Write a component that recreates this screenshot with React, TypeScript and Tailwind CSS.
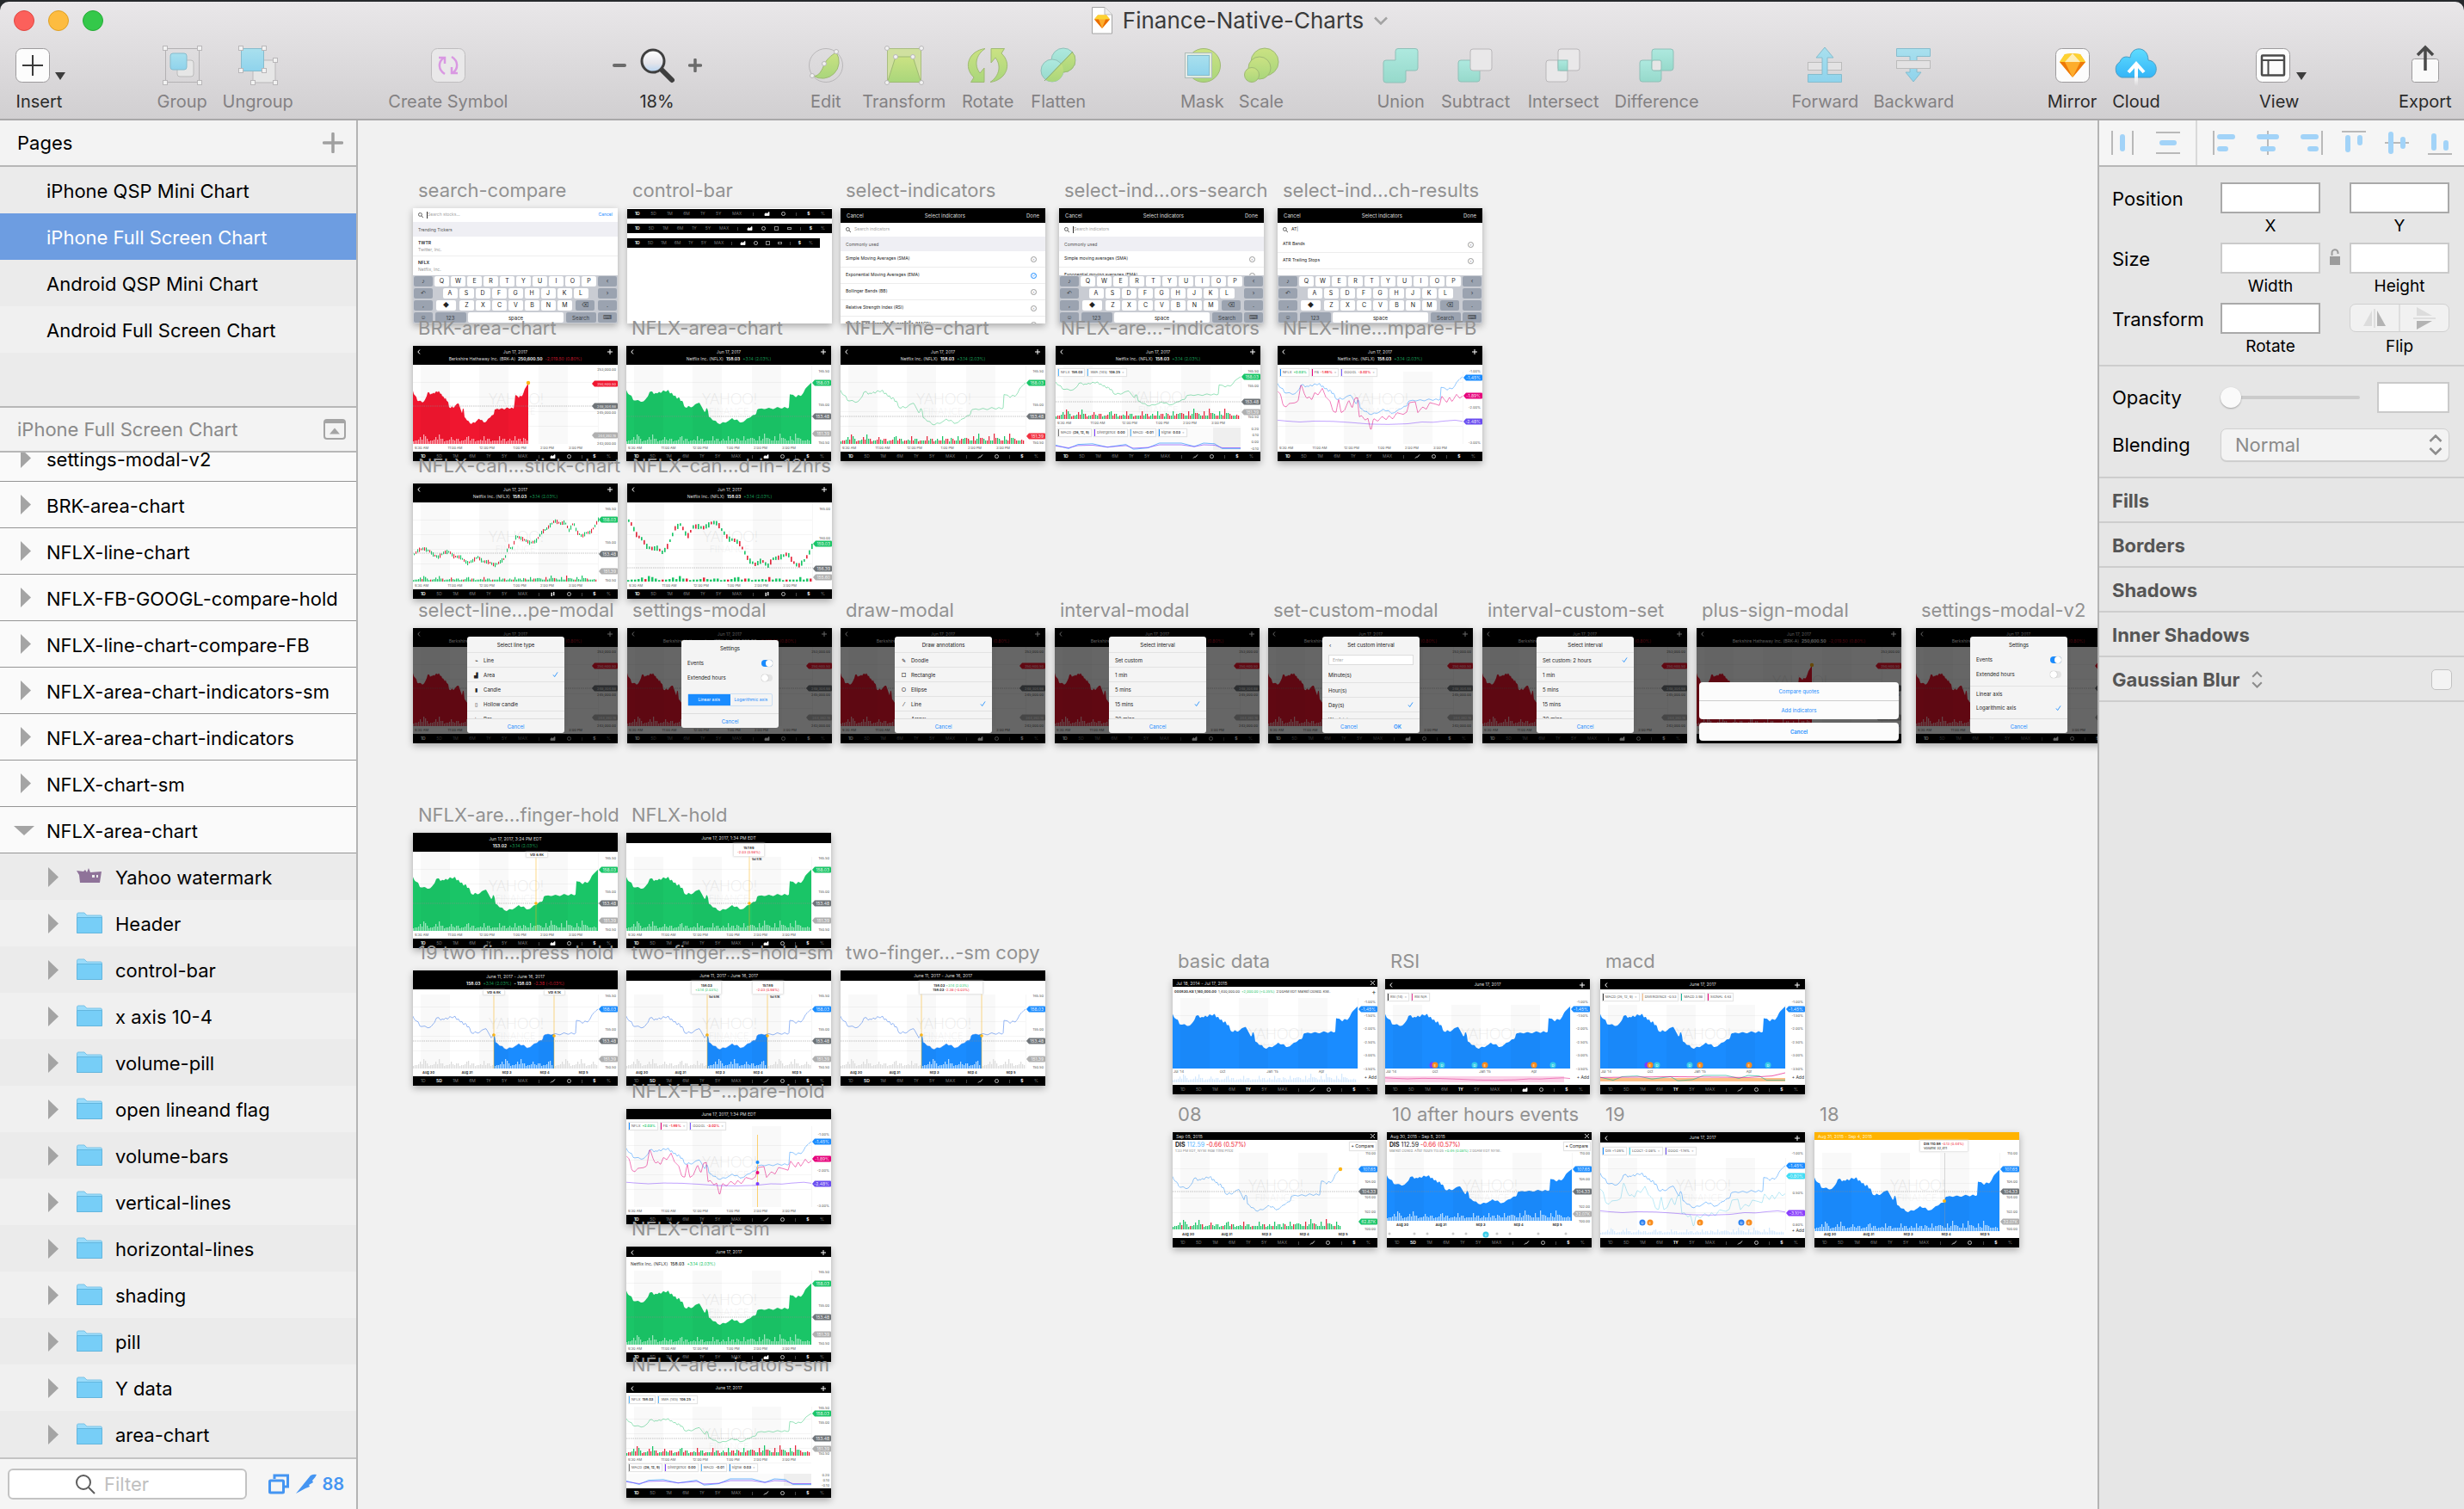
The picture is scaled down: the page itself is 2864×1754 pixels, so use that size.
import React from 'react';

/* ---------- shared chart data ---------- */

const BLUE = '#1a8cff';
const GREEN = '#1ac567';
const RED = '#f0162f';
const GRAY = '#6f7478';
const LGRAY = '#b0b0b0';

type Pt = [number, number];

/* x: 0..1 over the trading day, y: 0 (high) .. 1 (low) */
const norm = (pts: Pt[], x0: number, w: number, y0: number, h: number): Pt[] =>
  pts.map(([x, y]) => [(x - x0) / w, (y - y0) / h]);

const PRICE = norm(
  [
    [804, 791], [809, 803], [815, 808], [822, 811], [828, 826], [833, 828], [845, 826], [856, 833], [865, 830], [872, 822],
    [880, 812], [885, 798], [893, 795], [900, 805], [906, 801], [912, 803], [918, 797], [925, 802], [932, 792], [942, 797], [950, 790],
    [956, 804], [962, 800], [968, 812], [975, 810], [980, 822], [988, 815], [993, 830], [1000, 828], [1006, 850],
    [1015, 853], [1020, 846], [1030, 852], [1035, 849], [1045, 840], [1058, 835], [1063, 843], [1072, 860], [1078, 871], [1083, 853],
    [1088, 857], [1090, 884], [1098, 888], [1105, 897], [1115, 898], [1122, 907], [1130, 910], [1140, 903],
    [1150, 905], [1165, 895], [1172, 889], [1180, 896], [1190, 894], [1200, 905], [1212, 902], [1225, 890],
    [1235, 887], [1245, 878], [1255, 877], [1260, 858], [1275, 855], [1285, 858], [1300, 853], [1315, 858],
    [1330, 850], [1345, 856], [1355, 850], [1365, 855], [1370, 853], [1373, 806], [1385, 808], [1395, 817],
    [1402, 808], [1412, 812], [1420, 802], [1428, 785], [1435, 778], [1443, 770], [1448, 766],
  ],
  804, 644, 766, 144,
);

const PINK = norm(
  [
    [1055, 795], [1062, 806], [1068, 845], [1075, 850], [1082, 838], [1095, 836], [1103, 830], [1110, 770], [1118, 805], [1123, 820],
    [1130, 815], [1135, 826], [1142, 800], [1150, 808], [1160, 785], [1168, 815], [1178, 830], [1185, 865], [1192, 870], [1198, 822],
    [1204, 870], [1212, 862], [1222, 826], [1230, 855], [1236, 820], [1243, 818], [1246, 885], [1252, 880], [1260, 896], [1267, 890],
    [1274, 934], [1280, 890], [1290, 900], [1300, 883], [1310, 895], [1316, 880], [1325, 892], [1335, 870], [1350, 876], [1358, 868], [1364, 835],
    [1378, 832], [1384, 870], [1395, 850], [1404, 858], [1412, 835], [1425, 840], [1435, 845], [1440, 812], [1452, 835], [1458, 815],
    [1464, 832], [1475, 806], [1482, 820], [1489, 812],
  ],
  1055, 434, 745, 165,
);

const PURPLE: Pt[] = [
  [0, 0.2], [0.05, 0.35], [0.12, 0.5], [0.2, 0.35], [0.3, 0.4], [0.4, 0.6], [0.5, 0.85], [0.6, 0.9], [0.7, 0.8], [0.78, 0.5],
  [0.84, 0.55], [0.9, 0.35], [0.96, 0.2], [1, 0.4],
];

const CANDLE_A = norm(
  [
    [40, 318], [52, 300], [64, 295], [78, 304], [88, 318], [98, 325], [112, 308], [124, 306], [134, 322], [150, 325], [166, 346], [178, 338],
    [190, 324], [202, 340], [216, 342], [230, 353], [242, 342], [254, 328], [262, 285], [270, 298], [280, 252], [290, 258], [300, 265],
    [312, 275], [326, 270], [340, 238], [352, 225], [370, 198], [384, 208], [394, 203], [404, 232], [414, 204], [422, 238], [434, 252],
    [444, 240], [454, 238], [464, 216], [472, 194],
  ],
  40, 432, 194, 159,
);

const CANDLE_B = norm(
  [
    [545, 195], [554, 212], [566, 250], [578, 262], [590, 290], [602, 295], [614, 293], [624, 308], [634, 295], [644, 262], [654, 225],
    [668, 210], [676, 240], [684, 250], [696, 220], [706, 218], [718, 224], [730, 215], [740, 204], [752, 208], [764, 235], [778, 262],
    [790, 265], [802, 275], [812, 300], [824, 335], [840, 350], [854, 335], [868, 355], [880, 330], [896, 325], [914, 312], [926, 340],
    [938, 355], [950, 340], [962, 315], [972, 280],
  ],
  545, 427, 195, 160,
);

function sample(pts: Pt[], t: number): number {
  if (t <= pts[0][0]) return pts[0][1];
  for (let i = 1; i < pts.length; i++) {
    if (t <= pts[i][0]) {
      const [x0, y0] = pts[i - 1];
      const [x1, y1] = pts[i];
      return y0 + ((y1 - y0) * (t - x0)) / (x1 - x0);
    }
  }
  return pts[pts.length - 1][1];
}

type Series = { color: string; top: number; bottom: number; width?: number; pts?: Pt[]; from?: number; to?: number; base?: number; opacity?: number };

function SeriesPath({ s }: { s: Series }) {
  const end = s.width ?? 215;
  const a = s.from ?? 0;
  const b = s.to ?? end;
  const pts = s.pts ?? PRICE;
  const out: string[] = [];
  for (let x = a; x <= b; x += 1) out.push(`${x},${(s.top + sample(pts, x / end) * (s.bottom - s.top)).toFixed(1)}`);
  if (s.base !== undefined) return <polygon fill={s.color} points={`${a},${s.base} ${out.join(' ')} ${b},${s.base}`} />;
  return <polyline fill="none" stroke={s.color} strokeWidth={0.8} opacity={s.opacity ?? 0.8} points={out.join(' ')} />;
}

const HEIGHTS = [3, 7, 4, 5, 9, 4, 6, 4, 7, 5, 11, 4, 5, 8, 4, 6, 5, 9, 6, 4, 7, 5, 4, 8, 5, 6, 12, 5, 8, 4, 6, 7];

type Vol = { base: number; max?: number; color: string | 'mix' | 'mixg'; from?: number; to?: number; step?: number };

function Volume({ v }: { v: Vol }) {
  const bars: React.ReactNode[] = [];
  const step = v.step ?? 2;
  let i = 0;
  for (let x = v.from ?? 0; x < (v.to ?? 215) - 1; x += step) {
    const h = (HEIGHTS[(i * 7 + (i >> 3)) % HEIGHTS.length] / 12) * (v.max ?? 12);
    let c = v.color;
    if (c === 'mix') c = (i * 5 + (i >> 2)) % 7 < 2 ? GREEN : '#e5283d';
    if (c === 'mixg') c = (i * 5 + (i >> 2)) % 9 < 7 ? GREEN : '#e5283d';
    bars.push(<rect key={i} x={x} y={v.base - h} width={step * 0.62} height={h} fill={c} />);
    i++;
  }
  return <>{bars}</>;
}

function Candles({ pts, top, bottom, step }: { pts: Pt[]; top: number; bottom: number; step: number }) {
  const out: React.ReactNode[] = [];
  let i = 0;
  for (let x = 1; x < 216; x += step) {
    const y = top + sample(pts, x / 215) * (bottom - top);
    const h = step + ((i * 5) % 4);
    out.push(<rect key={i} x={x} y={y - h / 2} width={step * 0.55} height={h} fill={(i * 3 + (i >> 2)) % 5 < 3 ? GREEN : '#e5283d'} />);
    i++;
  }
  return <>{out}</>;
}

type Pill = { y: number; color: string; text: string; wide?: boolean };

function PillTag({ p }: { p: Pill }) {
  const x = p.wide ? 208 : 216;
  return (
    <g>
      <path d={`M${x} ${p.y}L${x + 3} ${p.y - 3.5}H237a1 1 0 0 1 1 1V${p.y + 2.5}a1 1 0 0 1-1 1H${x + 3}Z`} fill={p.color} />
      <text x={236} y={p.y + 2} textAnchor="end" fontSize={p.wide ? 4 : 5} fill="#fff" opacity={0.85}>{p.text}</text>
    </g>
  );
}

type PlotProps = {
  y0: number;
  y1: number;
  gridTop?: number;
  base?: number;
  series?: Series[];
  vols?: Vol[];
  pills?: Pill[];
  axis?: [number, string][];
  times?: { y: number; labels: [number, string][]; dark?: boolean };
  guide?: number;
  mark?: number;
  extra?: React.ReactNode;
  before?: React.ReactNode;
};

function Plot({ y0, y1, gridTop = y0, base = 114, series = [], vols = [], pills = [], axis = [], times, guide, mark = 68, extra, before }: PlotProps) {
  return (
    <svg className="block w-full" viewBox={`0 ${y0} 238 ${y1 - y0}`}>
      {[42, 59, 76, 93].filter((y) => y > gridTop).map((y) => <rect key={y} x={0} y={y} width={215} height={0.6} fill="#eeeeee" />)}
      <rect x={215} y={gridTop} width={0.5} height={base - gridTop} fill="#ededed" />
      <text x={120} y={mark} textAnchor="middle" fontSize={17} fontWeight={300} fill="#000" opacity={0.07} className="font-['Lato']">YAHOO!</text>
      <text x={119} y={mark + 12} textAnchor="middle" fontSize={11} fontWeight={300} fill="#000" opacity={0.06} className="font-['Lato']">FINANCE</text>
      {before}
      {series.map((s, i) => <SeriesPath key={i} s={s} />)}
      {[9, 77, 146].map((x) => <rect key={x} x={x} y={gridTop} width={34} height={base - gridTop} fill="#000" opacity={0.025} />)}
      {vols.map((v, i) => <Volume key={i} v={v} />)}
      {guide !== undefined && <line x1={0} x2={216} y1={guide} y2={guide} stroke="#8a8a8a" strokeWidth={0.5} strokeDasharray="1.5 1" />}
      {axis.map(([y, t]) => <text key={t} x={236} y={y} textAnchor="end" fontSize={4} fill="#555">{t}</text>)}
      {times?.labels.map(([x, t]) => (
        <text key={x} x={x} y={times.y} fontSize={4} textAnchor="middle" fill={times.dark ? '#222' : '#555'} fontWeight={times.dark ? 600 : 400}>{t}</text>
      ))}
      {pills.map((p) => <PillTag key={p.text} p={p} />)}
      {extra}
    </svg>
  );
}

const DAY: [number, string][] = [[10, '9:30 AM'], [49, '11:00 AM'], [86, '12:00 PM'], [124, '1:00 PM'], [156, '2:00 PM'], [189, '3:00 PM']];
const WEEK: [number, string][] = [[18, 'Aug 30'], [63, 'Aug 31'], [109, 'Sep 3'], [153, 'Sep 4'], [198, 'Sep 5']];
const QUARTERS: [number, string][] = [[7, "Jul '14"], [58, 'Oct'], [116, "Jan '15"], [173, 'Apr']];

/* ---------- artboard parts ---------- */

type Mode = 'area' | 'line' | 'candle';

function ModeIcon({ mode }: { mode: Mode }) {
  return (
    <svg viewBox="0 0 8 6" className="h-[5px] w-[7px]" fill="none" stroke="#fff">
      {mode === 'area' && <path d="M1 5.500V3l2-1 1 1 3-2.500V5.500Z" fill="#fff" />}
      {mode === 'line' && <path d="M1 5.500l2-2 1 .5 3-3.500" />}
      {mode === 'candle' && <path d="M2.500 1v5M5.500 0v5" strokeWidth={1.6} />}
    </svg>
  );
}

function Ranges({ mode = 'area', active = '1D', icons = false }: { mode?: Mode; active?: string; icons?: boolean }) {
  const bar = <span className="h-[4px] w-px bg-[#444]" />;
  return (
    <div className="flex h-[11px] shrink-0 items-center justify-between bg-black pl-[9px] pr-[8px] text-[5px] leading-[11px] text-[#777]">
      {['1D', '5D', '1M', '6M', '1Y', '5Y', 'MAX'].map((t) => (
        <span key={t} className={t === active ? 'font-semibold text-white' : ''}>{t}</span>
      ))}
      {bar}
      <ModeIcon mode={mode} />
      <span className="size-[5px] rounded-full border border-[#bbb]" />
      {icons && <span className="size-[5px] border border-[#888]" />}
      {icons && <span className="h-[3px] w-[5px] border border-[#888]" />}
      {bar}
      <span className="font-semibold text-white">$</span>
      <span>%</span>
    </div>
  );
}

function Head({ date, left, right, children, tone = 'bg-black text-[#ddd]', h = 'h-[12px]', align = 'justify-center' }: {
  date: string; left?: boolean; right?: string; children?: React.ReactNode; tone?: string; h?: string; align?: string;
}) {
  return (
    <div className={`relative flex shrink-0 flex-col justify-center text-[5px] leading-[8px] ${tone} ${h}`}>
      <div className={`flex px-1 ${align}`}>{date}</div>
      {children && <div className="flex justify-center gap-[3px] whitespace-nowrap">{children}</div>}
      {left && (
        <svg viewBox="0 0 4 6" className="absolute left-[5px] top-[4px] h-[6px] w-[4px]" fill="none" stroke="#fff"><path d="M3 .5L.8 3 3 5.500" /></svg>
      )}
      {right === '+' && (
        <svg viewBox="0 0 6 6" className="absolute right-[6px] top-[4px] size-[6px]" stroke="#fff"><path d="M3 0v6M0 3h6" /></svg>
      )}
      {right === 'x' && (
        <svg viewBox="0 0 6 6" className="absolute right-[3px] top-[2px] size-[5px]" stroke="#fff"><path d="M0 0l6 6M6 0L0 6" /></svg>
      )}
    </div>
  );
}

const NetflixHead = () => (
  <Head date="Jun 17, 2017" left right="+" h="h-[22px]">
    <span>Netflix Inc. (NFLX)</span><b className="font-semibold text-white">158.03</b><span className="text-[#179a52]">+3.14 (2.03%)</span>
  </Head>
);

const BerkshireHead = () => (
  <Head date="Jun 17, 2017" left right="+" h="h-[22px]">
    <span>Berkshire Hathaway Inc. (BRK-A)</span><b className="font-semibold text-white">250,600.50</b><span className="text-[#c2172b]">-2,019.50 (0.80%)</span>
  </Head>
);

function Chip({ bar, name, value, tone = 'text-[#333]', x }: { bar: string; name: string; value?: string; tone?: string; x?: boolean }) {
  return (
    <span className={`flex h-[8px] items-center gap-[2px] whitespace-nowrap border-l bg-white px-[2px] text-[4px] leading-[8px] text-[#555] shadow-[0_0_1px_1px_#e4e4e4] ${bar}`}>
      {name}{value && <b className={`font-semibold ${tone}`}>{value}</b>}{x && <span className="text-[#999]">×</span>}
    </span>
  );
}

const CompareChips = () => (
  <>
    <Chip bar="border-[#1a8cff]" name="NFLX" value="+2.03%" tone="text-[#1ac567]" />
    <Chip bar="border-[#e6007a]" name="FB" value="-1.89%" tone="text-[#f0162f]" x />
    <Chip bar="border-[#7c5cff]" name="GOOGL" value="-3.02%" tone="text-[#f0162f]" x />
  </>
);

const ChipRow = ({ top, children }: { top: string; children: React.ReactNode }) => (
  <div className={`absolute left-[3px] flex gap-[4px] ${top}`}>{children}</div>
);

const NFLX_AXIS: [number, string][] = [[31, '165.50'], [70, '155.00'], [114, '150.50']];
const nflxPills = (top: number, prev: number, low: number, color = GREEN, lowColor = LGRAY): Pill[] => [
  { y: top, color, text: '158.03' }, { y: prev, color: GRAY, text: '153.48' }, { y: low, color: lowColor, text: '151.39' },
];

/* ---------- artboards ---------- */

const BrkChart = () => (
  <>
    <BerkshireHead />
    <Plot
      y0={22} y1={123} series={[{ color: RED, top: 44, bottom: 91, width: 134, base: 114 }]}
      vols={[{ base: 114, color: '#fba8b1', to: 135 }]} guide={70}
      axis={[[29, '253,000.00'], [79, '245,000.00'], [115, '243,000.00']]}
      pills={[{ y: 44, color: RED, text: '250,600.50', wide: true }, { y: 70, color: GRAY, text: '248,304.98', wide: true }, { y: 104, color: LGRAY, text: '244,392.19', wide: true }]}
      times={{ y: 120, labels: DAY }} extra={<circle cx={134} cy={43} r={2.2} fill="#fdb515" />}
    />
    <Ranges />
  </>
);

const NflxArea = () => (
  <>
    <NetflixHead />
    <Plot y0={22} y1={123} series={[{ color: GREEN, top: 43, bottom: 91, base: 114 }]} vols={[{ base: 114, color: '#9be5bc' }]} guide={82}
      axis={NFLX_AXIS} pills={nflxPills(43, 82, 102)} times={{ y: 120, labels: DAY }} />
    <Ranges />
  </>
);

const NflxLine = () => (
  <>
    <NetflixHead />
    <Plot y0={22} y1={123} series={[{ color: '#5fd394', top: 43, bottom: 92 }]} vols={[{ base: 114, color: 'mix' }]} guide={82}
      axis={NFLX_AXIS} pills={nflxPills(43, 82, 105, GREEN, '#f23040')} times={{ y: 120, labels: DAY }} />
    <Ranges mode="line" />
  </>
);

const MACD_PTS: Pt[] = [[0, 0.3], [0.07, 0.8], [0.12, 0.2], [0.2, 0.1], [0.28, 0.6], [0.38, 0.2], [0.42, 0.9], [0.5, 0.7], [0.56, 0], [0.68, 0], [0.75, 0.5], [0.8, 0], [0.86, 0.1], [0.9, 0.8], [1, 0.8]];
const MACD_PTS2: Pt[] = MACD_PTS.map(([x, y]) => [x, 0.25 + y * 0.55]);

const MacdPlot = ({ top, bottom }: { top: number; bottom: number }) => (
  <>
    <rect x={0} y={top} width={183} height={bottom - top} fill="#fbfbfb" />
    <rect x={183} y={top} width={32} height={bottom - top} fill="#efefef" />
    <SeriesPath s={{ color: BLUE, pts: MACD_PTS, top: bottom - 8, bottom: bottom }} />
    <SeriesPath s={{ color: '#7c3cff', pts: MACD_PTS2, top: bottom - 8, bottom: bottom }} />
  </>
);

const MacdChips = () => (
  <>
    <Chip bar="border-[#777]" name="MACD" value="(26, 12, 9)" />
    <Chip bar="border-[#7c3cff]" name="Divergence" value="0.00" />
    <Chip bar="border-[#5ab8ff]" name="MACD" value="-0.01" />
    <Chip bar="border-[#1a8cff]" name="Signal" value="0.03" x />
  </>
);

const IndicatorChips = () => (
  <>
    <Chip bar="border-[#5ab8ff]" name="NFLX" value="158.03" />
    <Chip bar="border-[#5ab8ff]" name="SMA (145)" value="106.25" x />
  </>
);

const NflxIndicators = () => (
  <>
    <NetflixHead />
    <Plot y0={22} y1={123} base={85} mark={66} series={[{ color: '#5fd394', top: 36, bottom: 70 }]} vols={[{ base: 85, color: 'mix' }]} guide={65}
      axis={[[31, '165.50'], [48, '155.00'], [84, '150.50'], [98, '0.20'], [105, '0.10'], [113, '0.00'], [121, '-0.10']]}
      pills={nflxPills(36, 65, 77)} times={{ y: 91, labels: DAY }} extra={<MacdPlot top={95} bottom={121} />} />
    <Ranges mode="line" />
    <ChipRow top="top-[27px]"><IndicatorChips /></ChipRow>
    <ChipRow top="top-[97px]"><MacdChips /></ChipRow>
  </>
);

const comparePlot = (y0: number, dy: number, extra?: React.ReactNode) => (
  <Plot y0={y0} y1={123} gridTop={y0 + 8}
    series={[
      { color: BLUE, top: 36 + dy, bottom: 80 + dy, opacity: 0.6 },
      { color: '#e6007a', top: 36 + dy, bottom: 91 + dy, pts: PINK, opacity: 0.65 },
      { color: '#7c3cff', top: 85 - dy / 2, bottom: 92 - dy, pts: PURPLE, opacity: 0.6 },
    ]}
    axis={[[31, '-1.00%'], [73, '-2.00%'], [114, '-3.00%']]}
    pills={[{ y: 37 + dy / 2, color: BLUE, text: '-1.45%' }, { y: 58, color: '#e6007a', text: '-1.89%' }, { y: 88 - dy / 2, color: '#6a4cf0', text: '-2.48%' }]}
    times={{ y: 120, labels: DAY }} extra={extra} />
);

const NflxCompare = () => (
  <>
    <NetflixHead />
    {comparePlot(22, 0)}
    <Ranges mode="line" />
    <ChipRow top="top-[27px]"><CompareChips /></ChipRow>
  </>
);

const CandleChart = ({ b }: { b?: boolean }) => (
  <>
    <NetflixHead />
    <Plot y0={22} y1={123} guide={b ? 98 : 81} vols={[{ base: 114, color: 'mixg', max: 7, step: b ? 4 : 2 }]}
      before={<Candles pts={b ? CANDLE_B : CANDLE_A} top={42} bottom={b ? 96 : 95} step={b ? 3 : 2} />}
      axis={b ? [[31, '165.00'], [65, '160.00']] : NFLX_AXIS}
      pills={b ? [{ y: 70, color: GREEN, text: '159.03' }, { y: 99, color: GRAY, text: '156.39' }, { y: 109, color: LGRAY, text: '155.60' }] : nflxPills(42, 82, 102)}
      times={{ y: 120, labels: DAY }} />
    <Ranges mode="candle" />
  </>
);

const Cursor = ({ x, y, top, bottom = 114 }: { x: number; y: number; top: number; bottom?: number }) => (
  <>
    <rect x={x - 0.5} y={top} width={1} height={bottom - top} fill="#fdb515" opacity={0.5} />
    <circle cx={x} cy={y} r={1.8} fill="#fdb515" />
  </>
);

const Tip = ({ pos, children }: { pos: string; children: React.ReactNode }) => (
  <div className={`absolute flex flex-col items-center whitespace-nowrap bg-white px-[4px] text-[4px] leading-[5px] font-semibold text-[#222] shadow-[0_0_2px_1px_#ddd] ${pos}`}>{children}</div>
);

const FingerHold = () => (
  <>
    <Head date="Jun 17, 2017, 3:24 PM EDT" h="h-[22px]"><b className="font-semibold text-white">153.02</b><span className="text-[#179a52]">+3.14 (2.03%)</span></Head>
    <Plot y0={22} y1={123} series={[{ color: GREEN, top: 43, bottom: 91, base: 114 }]} vols={[{ base: 114, color: '#9be5bc' }]} guide={82}
      axis={NFLX_AXIS} pills={nflxPills(43, 82, 102)} times={{ y: 120, labels: DAY }} extra={<Cursor x={143} y={82} top={22} />} />
    <Ranges />
    <Tip pos="left-[132px] top-[23px]">Vol 6.8K</Tip>
  </>
);

const NflxHold = () => (
  <>
    <Head date="June 17, 2017, 1:34 PM EDT" />
    <Plot y0={12} y1={123} gridTop={28} series={[{ color: GREEN, top: 43, bottom: 91, base: 114 }]} vols={[{ base: 114, color: '#9be5bc' }]} guide={82}
      axis={NFLX_AXIS} pills={nflxPills(43, 82, 102)} times={{ y: 120, labels: DAY }} extra={<Cursor x={143} y={82} top={26} />} />
    <Ranges />
    <Tip pos="left-[125px] top-[13px] pb-[2px] pt-[2px]"><span>157.89</span><span className="font-normal text-[#f0162f]">-2.03 (0.98%)</span></Tip>
    <span className="absolute left-[146px] top-[29px] text-[3px] leading-[4px] font-semibold">Vol 8.1K</span>
  </>
);

const TwoFinger = ({ kind }: { kind: 'full' | 'sm' | 'copy' }) => (
  <>
    <Head date="June 11, 2017 - June 16, 2017" h={kind === 'full' ? 'h-[22px]' : 'h-[12px]'}>
      {kind === 'full' && (
        <>
          <b className="font-semibold text-white">158.03</b><span className="text-[#179a52]">+3.14 (2.03%)</span>
          <b className="font-semibold text-white">- 158.03</b><span className="text-[#c2172b]">-2.38 (-0.03%)</span>
        </>
      )}
    </Head>
    <Plot y0={kind === 'full' ? 22 : 12} y1={123} gridTop={28} series={[{ color: '#5c8ff0', top: 45, bottom: 92 }, { color: BLUE, top: 45, bottom: 92, base: 114, from: 94, to: 164 }]}
      vols={[{ base: 114, color: '#dcdcdc', to: 94 }, { base: 114, color: '#dcdcdc', from: 165 }, { base: 114, color: '#b8dcff', from: 95, to: 164 }]} guide={82}
      axis={NFLX_AXIS} pills={nflxPills(45, 82, 103, BLUE)} times={{ y: 120, labels: WEEK, dark: true }}
      extra={<><Cursor x={94} y={75} top={22} /><Cursor x={164} y={76} top={22} /></>} />
    <Ranges mode="line" active="5D" />
    {kind === 'full' && <><Tip pos="left-[82px] top-[23px]">Vol 6.8K</Tip><Tip pos="left-[153px] top-[23px]">Vol 8.1K</Tip></>}
    {kind === 'sm' && (
      <>
        <Tip pos="left-[76px] top-[13px] pb-[2px] pt-[2px]"><span>158.03</span><span className="font-normal text-[#1ac567]">+3.14 (2.03%)</span></Tip>
        <Tip pos="left-[147px] top-[13px] pb-[2px] pt-[2px]"><span>157.89</span><span className="font-normal text-[#f0162f]">-2.03 (0.98%)</span></Tip>
        <span className="absolute left-[96px] top-[29px] text-[3px] leading-[4px] font-semibold">Vol 6.8K</span>
        <span className="absolute left-[167px] top-[29px] text-[3px] leading-[4px] font-semibold">Vol 8.1K</span>
      </>
    )}
    {kind === 'copy' && (
      <Tip pos="left-[92px] top-[13px] w-[73px] pb-[2px] pt-[2px]">
        <span>158.03 <span className="font-normal text-[#1ac567]">+3.14 (2.03%)</span></span>
        <span>158.03 <span className="font-normal text-[#f0162f]">-2.38 (-0.03%)</span></span>
      </Tip>
    )}
  </>
);

const CompareHold = () => (
  <>
    <Head date="June 17, 2017, 1:34 PM EDT" />
    {comparePlot(12, 2, (
      <>
        <rect x={152} y={30} width={1} height={84} fill="#fdb515" opacity={0.6} />
        <circle cx={152.5} cy={62} r={2} fill={BLUE} /><circle cx={152.5} cy={74} r={2} fill="#e6007a" /><circle cx={152.5} cy={87} r={2} fill="#7c3cff" />
      </>
    ))}
    <Ranges mode="line" />
    <ChipRow top="top-[16px]"><CompareChips /></ChipRow>
  </>
);

const ChartSm = () => (
  <>
    <Head date="June 17, 2017" left right="+" />
    <Plot y0={12} y1={123} gridTop={28} series={[{ color: GREEN, top: 43, bottom: 91, base: 114 }]} vols={[{ base: 114, color: '#9be5bc' }]} guide={82}
      axis={NFLX_AXIS} pills={nflxPills(43, 82, 102)} times={{ y: 120, labels: DAY }} />
    <Ranges />
    <div className="absolute left-[5px] top-[16px] flex gap-[3px] text-[5px] leading-[8px] text-[#333]">
      <span>Netflix Inc. (NFLX)</span><b className="font-semibold">158.03</b><span className="text-[#1ac567]">+3.14 (2.03%)</span>
    </div>
  </>
);

const IndicatorsSm = () => (
  <>
    <Head date="June 17, 2017" left right="+" />
    <Plot y0={12} y1={123} gridTop={28} base={85} mark={66} series={[{ color: '#5fd394', top: 36, bottom: 70 }]} vols={[{ base: 85, color: 'mix' }]} guide={65}
      axis={[[31, '165.50'], [48, '155.00'], [84, '150.50'], [109, '0.20'], [115, '0.10'], [121, '-0.10']]}
      pills={nflxPills(36, 65, 77)} times={{ y: 91, labels: DAY }} extra={<MacdPlot top={106} bottom={120} />} />
    <Ranges mode="line" />
    <ChipRow top="top-[16px]"><IndicatorChips /></ChipRow>
    <ChipRow top="top-[95px]"><MacdChips /></ChipRow>
  </>
);

/* keyboard and search sheets */

const Key = ({ t, w = 'w-[17px]', dark }: { t: string; w?: string; dark?: boolean }) => (
  <span className={`flex h-[12px] items-center justify-center rounded-[2px] ${t.length > 1 ? 'text-[6px]' : 'text-[7px]'} ${w} ${dark ? 'bg-[#9ba3b0] text-[#3a3f46]' : 'bg-white text-[#222]'}`}>{t}</span>
);

const Keyboard = () => (
  <div className="absolute inset-x-0 bottom-0 flex flex-col gap-[2px] bg-[#c9ccd3] px-[1px] pb-[1px] pt-[1px]">
    <div className="flex justify-between"><Key t="♪" w="w-[22px]" dark />{[...'QWERTYUIOP'].map((k) => <Key key={k} t={k} />)}<Key t="‹" w="w-[22px]" dark /></div>
    <div className="flex justify-between">
      <Key t="↶" w="w-[22px]" dark /><div className="flex gap-[2px]">{[...'ASDFGHJKL'].map((k) => <Key key={k} t={k} />)}</div><Key t="›" w="w-[22px]" dark />
    </div>
    <div className="flex justify-between">
      <Key t="," w="w-[22px]" dark /><Key t="◆" w="w-[23px]" /><div className="flex gap-[2px]">{[...'ZXCVBNM'].map((k) => <Key key={k} t={k} />)}</div><Key t="⌫" w="w-[22px]" dark /><Key t="." w="w-[22px]" dark />
    </div>
    <div className="flex justify-between"><Key t="☺" w="w-[22px]" dark /><Key t="123" w="w-[36px]" dark /><Key t="space" w="w-[111px]" /><Key t="Search" w="w-[35px]" dark /><Key t="⌨" w="w-[22px]" dark /></div>
  </div>
);

const SearchLine = ({ text, dim = true, caret, right }: { text: string; dim?: boolean; caret?: boolean; right?: string }) => (
  <div className="flex h-[16px] shrink-0 items-center gap-[4px] px-[6px] text-[5px]">
    <svg viewBox="0 0 8 8" className="size-[6px]" fill="none" stroke="#333"><circle cx={3.2} cy={3.2} r={2.6} /><path d="M5 5l3 3" /></svg>
    <span className={`${dim ? 'text-[#a5a5a5]' : 'text-[#222]'} ${caret ? 'border-l border-[#333]' : ''}`}>{text}</span>
    {right && <span className="ml-auto text-[5px] text-[#1a8cff]">{right}</span>}
  </div>
);

const GroupLine = ({ text }: { text: string }) => (
  <div className="flex h-[17px] shrink-0 items-center bg-[#efeff4] px-[6px] pt-[3px] text-[5px] text-[#555]">{text}</div>
);

const SearchCompare = () => (
  <>
    <SearchLine text="Search stocks..." caret right="Cancel" />
    <GroupLine text="Trending Tickers" />
    {[['TWTR', 'Twitter, Inc.'], ['NFLX', 'Netflix, Inc.']].map(([a, b]) => (
      <div key={a} className="flex h-[23px] shrink-0 flex-col justify-center border-b border-[#eee] px-[6px] text-[5px] leading-[8px] text-[#999]">
        <span className="font-semibold text-[#222]">{a}</span><span>{b}</span>
      </div>
    ))}
    <Keyboard />
  </>
);

const ControlBars = () => (
  <div className="flex flex-col gap-[6px] pt-px">
    <Ranges /><Ranges icons /><div className="w-[224px]"><Ranges icons /></div>
  </div>
);

const IndicatorRow = ({ t, on }: { t: string; on?: boolean }) => (
  <div className="flex h-[19px] shrink-0 items-center justify-between border-b border-[#ececec] px-[6px] pr-[10px] text-[5px] text-[#222]">
    {t}
    <span className={`flex size-[7px] items-center justify-center rounded-full border text-[5px] leading-none ${on ? 'border-[#1a8cff] text-[#1a8cff]' : 'border-[#999] text-[#999]'}`}>{on ? '✓' : '+'}</span>
  </div>
);

const SelectIndicators = ({ kind }: { kind: 'list' | 'search' | 'results' }) => (
  <>
    <div className="flex h-[17px] shrink-0 items-center justify-between bg-black px-[7px] text-[6px] text-[#ddd]"><span>Cancel</span><span>Select indicators</span><span>Done</span></div>
    <SearchLine text={kind === 'results' ? 'AT|' : 'Search indicators'} dim={kind !== 'results'} caret={kind === 'search'} />
    {kind !== 'results' && <GroupLine text="Commonly used" />}
    {kind === 'list' && (
      <>
        <IndicatorRow t="Simple Moving Averages (SMA)" /><IndicatorRow t="Exponential Moving Averages (EMA)" on /><IndicatorRow t="Bollinger Bands (BB)" />
        <IndicatorRow t="Relative Strength Index (RSI)" /><IndicatorRow t="Moving Convergence Divergence (MACD)" />
      </>
    )}
    {kind === 'search' && <><IndicatorRow t="Simple moving averages (SMA)" /><IndicatorRow t="Exponential moving averages (EMA)" /></>}
    {kind === 'results' && <><IndicatorRow t="ATR Bands" /><IndicatorRow t="ATR Trailing Stops" /></>}
    {kind !== 'list' && <Keyboard />}
  </>
);

/* modals */

const Check = () => (
  <svg viewBox="0 0 8 7" className="ml-auto h-[6px] w-[7px]" fill="none" stroke="#1a8cff"><path d="M1 4l2 2.500L7 .5" /></svg>
);

const MRow = ({ t, icon, on, line = true }: { t: string; icon?: string; on?: boolean; line?: boolean }) => (
  <div className={`flex h-[17px] shrink-0 items-center gap-[5px] px-[7px] text-[6px] text-[#222] ${line ? 'border-t border-[#e2e2e2]' : ''}`}>
    {icon && <span className="w-[7px] text-center text-[6px]">{icon}</span>}{t}{on && <Check />}
  </div>
);

const Toggle = ({ on }: { on?: boolean }) => (
  <span className={`ml-auto flex h-[8px] w-[13px] rounded-full ${on ? 'justify-end bg-[#1a8cff]' : 'bg-[#e4e4e4]'}`}><span className="size-[8px] rounded-full bg-white shadow-[0_0_1px_#888]" /></span>
);

const ToggleRow = ({ t, on }: { t: string; on?: boolean }) => <div className="flex h-[17px] shrink-0 items-center px-[7px] text-[6px] text-[#222]">{t}<Toggle on={on} /></div>;

const Modal = ({ title, children, ok, back, short }: { title: string; children: React.ReactNode; ok?: boolean; back?: boolean; short?: boolean }) => (
  <>
    <BrkChart />
    <div className="absolute inset-0 bg-black/60" />
    <div className={`absolute left-[63px] flex w-[113px] flex-col overflow-hidden rounded-[3px] bg-[#f4f4f4] ${short ? 'top-[14px] h-[102px]' : 'top-[10px] h-[112px]'}`}>
      <div className="relative flex h-[18px] shrink-0 items-center justify-center text-[6px] text-[#111]">{back && <span className="absolute left-[8px]">‹</span>}{title}</div>
      <div className="flex min-h-0 flex-1 flex-col overflow-hidden">{children}</div>
      <div className="flex h-[17px] shrink-0 items-center justify-around border-t border-[#ddd] text-[6px] text-[#1a8cff]"><span>Cancel</span>{ok && <span className="font-semibold">OK</span>}</div>
    </div>
  </>
);

const PlusModal = () => (
  <>
    <BrkChart />
    <div className="absolute inset-0 bg-black/60" />
    <div className="absolute inset-x-[3px] bottom-[3px] flex flex-col gap-[4px] text-center text-[6px] leading-[21px] text-[#1a8cff]">
      <div className="rounded-[4px] bg-[#fcfcfc]"><div className="border-b border-[#ccc]">Compare quotes</div><div>Add indicators</div></div>
      <div className="rounded-[4px] bg-[#fcfcfc] font-semibold">Cancel</div>
    </div>
  </>
);

/* web variants */

const Dot = ({ x, y, c, t }: { x: number; y: number; c: string; t: string }) => (
  <g><circle cx={x} cy={y} r={3.5} fill={c} /><text x={x} y={y + 1.5} fontSize={4} textAnchor="middle" fill="#fff">{t}</text></g>
);

const AddMark = ({ y }: { y: number }) => <text x={237} y={y} fontSize={5} textAnchor="end" fill="#333">+ Add</text>;

const PCT_AXIS: [number, string][] = [[28, '-1.00%'], [44, '-1.50%'], [59, '-2.00%'], [75, '-2.50%'], [90, '-3.00%'], [106, '-3.50%']];

const Basic = () => (
  <>
    <Head date="Jul 18, 2014 - Jul 17, 2015" right="x" h="h-[9px]" align="justify-start" />
    <Plot y0={9} y1={123} gridTop={22} base={104} mark={70} series={[{ color: BLUE, top: 32, bottom: 81, base: 104 }]} vols={[{ base: 120, color: '#d3e8fd', max: 10 }]}
      axis={PCT_AXIS} pills={[{ y: 35, color: BLUE, text: '-1.45%' }]} times={{ y: 109, labels: QUARTERS }} extra={<><AddMark y={116} /><text x={234} y={18} fontSize={8} textAnchor="middle" fill="#333">+</text></>} />
    <Ranges mode="line" active="1Y" />
    <div className="absolute left-[2px] top-[11px] flex gap-[2px] whitespace-nowrap text-[4px] leading-[8px] text-[#333]">
      <b>000830.KS 1,160,000.00</b><span>1,400,000.00</span><span className="text-[#1ac567]">+2,000.00 (+0.35%)</span><span>2:00AM EDT Market closed. KSE.</span>
    </div>
  </>
);

const Markers = () => (
  <>
    <Dot x={55} y={100} c="#7c3cff" t="" /><Dot x={58} y={100} c="#f98b1c" t="E" /><Dot x={66} y={100} c="#36cbe8" t="D" /><Dot x={104} y={100} c="#36cbe8" t="D" />
    <Dot x={116} y={100} c="#f98b1c" t="E" /><Dot x={173} y={100} c="#f98b1c" t="E" /><Dot x={195} y={100} c="#36cbe8" t="D" />
  </>
);

const Rsi = ({ macd }: { macd?: boolean }) => (
  <>
    <Head date="June 17, 2017" left right="+" />
    <Plot y0={12} y1={123} gridTop={30} base={104} mark={70} series={[{ color: BLUE, top: 32, bottom: 81, base: 104 }]}
      axis={PCT_AXIS} pills={[{ y: 35, color: BLUE, text: '-1.45%' }]} times={{ y: 109, labels: QUARTERS }}
      extra={
        <>
          <Markers /><AddMark y={116} />
          {macd ? (
            <>
              <rect x={0} y={115} width={215} height={4} fill="#fcbf85" />
              <SeriesPath s={{ color: '#12b39a', pts: MACD_PTS, top: 112, bottom: 119 }} />
              <SeriesPath s={{ color: '#e6007a', pts: [[0, 0.6], [0.4, 0.5], [0.8, 0.6], [0.93, 0.4], [1, 0]], top: 109, bottom: 118 }} />
            </>
          ) : (
            <>
              <rect x={0} y={113} width={208} height={7} fill="#fbd3e8" />
              <SeriesPath s={{ color: '#e6409a', pts: PURPLE, top: 114, bottom: 118 }} />
            </>
          )}
        </>
      } />
    <Ranges mode={macd ? 'line' : 'area'} active="1Y" />
    <ChipRow top="top-[17px]">
      {macd ? (
        <><Chip bar="border-[#333]" name="MACD (26, 12, 9)" x /><Chip bar="border-[#fcbf85]" name="DIVERGENCE -0.53" /><Chip bar="border-[#12b39a]" name="MACD 3.98" /><Chip bar="border-[#e6007a]" name="SIGNAL 4.63" /></>
      ) : (
        <><Chip bar="border-[#333]" name="RSI (14)" x /><Chip bar="border-[#e6409a]" name="RSI N/A" /></>
      )}
    </ChipRow>
  </>
);

const DIS_AXIS: [number, string][] = [[26, '110.00'], [59, '106.00'], [77, '104.00'], [94, '102.00'], [114, '100.00']];

const DisQuote = ({ note, blue }: { note: React.ReactNode; blue?: boolean }) => (
  <>
    <div className="absolute left-[3px] top-[10px] whitespace-nowrap text-[7px] leading-[9px] text-[#222]">
      <b>DIS</b> <span className={blue ? 'text-[#5ab8ff]' : ''}>112.59</span> <span className="text-[#f0162f]">-0.66 (0.57%)</span>
      <div className="text-[4px] leading-[5px] text-[#888]">{note}</div>
    </div>
    <span className="absolute right-[2px] top-[12px] bg-white px-[2px] text-[5px] leading-[9px] text-[#222] shadow-[0_0_1px_1px_#e4e4e4]">+ Compare</span>
  </>
);

const Dis08 = () => (
  <>
    <Head date="Sep 05, 2015" right="x" h="h-[9px]" align="justify-start" />
    <Plot y0={9} y1={123} gridTop={24} series={[{ color: '#5aa8f5', top: 43, bottom: 92, width: 195 }]} vols={[{ base: 113, color: 'mixg', to: 196 }]} guide={69}
      axis={DIS_AXIS} pills={[{ y: 43, color: BLUE, text: '107.65' }, { y: 69, color: GRAY, text: '104.33' }, { y: 104, color: GREEN, text: '62.87K' }]}
      times={{ y: 120, labels: WEEK, dark: true }} extra={<circle cx={195} cy={43} r={2.2} fill="#fdb515" />} />
    <Ranges mode="line" active="" />
    <DisQuote blue note="1:33 PM EDT, NYSE Real Time Price" />
  </>
);

const AfterHours = () => (
  <>
    <Head date="Aug 30, 2015 - Sep 5, 2015" right="x" h="h-[9px]" align="justify-start" />
    <Plot y0={9} y1={123} gridTop={24} base={103} series={[{ color: BLUE, top: 43, bottom: 84, base: 103 }]} vols={[{ base: 103, color: '#b8dcff' }]} guide={69}
      axis={[[26, '110.00'], [56, '106.00'], [88, '102.00'], [105, '100.00']]} pills={[{ y: 43, color: BLUE, text: '107.65' }, { y: 69, color: GRAY, text: '104.33' }, { y: 95, color: LGRAY, text: '32.07K' }]}
      times={{ y: 109, labels: WEEK, dark: true }}
      extra={<>{[3, 32, 47, 77, 92, 128, 143, 176, 208].map((x) => <circle key={x} cx={x} cy={118} r={1.5} fill="#c9c9c9" />)}<Dot x={115} y={119} c="#36cbe8" t="D" /></>} />
    <Ranges mode="line" active="5D" />
    <DisQuote note={<>Market closed. After hours 113.05 <span className="text-[#1ac567]">+0.46 (0.08%)</span> 2:00AM EDT NYSE.</>} />
  </>
);

const Dis19 = () => (
  <>
    <Head date="June 17, 2017" left right="+" />
    <Plot y0={12} y1={123} gridTop={30} series={[
      { color: BLUE, top: 39, bottom: 88, opacity: 0.6 }, { color: '#6fd3ee', top: 50, bottom: 103, pts: PINK, opacity: 0.6 }, { color: '#7c3cff', top: 90, bottom: 97, pts: PURPLE, opacity: 0.6 },
    ]}
      vols={[{ base: 119, color: '#d3e8fd', max: 8 }]} axis={[[26, '-1.00%'], [72, '0.50%'], [109, '0.80%']]}
      pills={[{ y: 39, color: BLUE, text: '-1.45%' }, { y: 51, color: '#41ddf5', text: '-0.80%' }, { y: 94, color: '#8a3ffc', text: '-3.10%' }]}
      extra={<><Dot x={49} y={105} c="#2b7ff0" t="D" /><Dot x={58} y={105} c="#f98b1c" t="E" /><Dot x={116} y={105} c="#f98b1c" t="E" /><Dot x={164} y={105} c="#2b7ff0" t="D" /><Dot x={173} y={105} c="#f98b1c" t="E" /><AddMark y={116} /></>} />
    <Ranges mode="line" active="1Y" />
    <ChipRow top="top-[18px]"><Chip bar="border-[#1a8cff]" name="DIS +1.09%" /><Chip bar="border-[#41ddf5]" name="LCOC1 -2.08%" x /><Chip bar="border-[#6a4cf0]" name="GOOG -1.16%" x /></ChipRow>
  </>
);

const Dis18 = () => (
  <>
    <Head date="Aug 31, 2015 - Sep 4, 2015" h="h-[9px]" align="justify-start" tone="bg-[#ffb300] text-[#fff3cf]" />
    <Plot y0={9} y1={123} gridTop={24} base={115} series={[{ color: BLUE, top: 44, bottom: 93, base: 115 }]} vols={[{ base: 115, color: '#b8dcff' }]} guide={69}
      axis={DIS_AXIS} pills={[{ y: 43, color: BLUE, text: '107.65' }, { y: 69, color: GRAY, text: '104.33' }, { y: 104, color: LGRAY, text: '32.07K' }]}
      times={{ y: 120, labels: WEEK, dark: true }} extra={<><rect x={151} y={24} width={0.6} height={90} fill="#999" opacity={0.6} /><circle cx={151} cy={80} r={2} fill="#fdb515" /></>} />
    <Ranges mode="line" active="" />
    <Tip pos="left-[123px] top-[10px] py-[1px]"><span>DIS 110.98 <span className="font-normal text-[#f0162f]">-0.13 (0.44%)</span></span><span className="self-start font-normal">Volume 32,411</span></Tip>
  </>
);

const BOARDS: { x: number; y: number; name: string; body: React.ReactNode }[] = [
  { x: 64, y: 102, name: 'search-compare', body: <SearchCompare /> },
  { x: 313, y: 102, name: 'control-bar', body: <ControlBars /> },
  { x: 561, y: 102, name: 'select-indicators', body: <SelectIndicators kind="list" /> },
  { x: 815, y: 102, name: 'select-ind…ors-search', body: <SelectIndicators kind="search" /> },
  { x: 1069, y: 102, name: 'select-ind…ch-results', body: <SelectIndicators kind="results" /> },
  { x: 64, y: 262, name: 'BRK-area-chart', body: <BrkChart /> },
  { x: 312, y: 262, name: 'NFLX-area-chart', body: <NflxArea /> },
  { x: 561, y: 262, name: 'NFLX-line-chart', body: <NflxLine /> },
  { x: 811, y: 262, name: 'NFLX-are…-indicators', body: <NflxIndicators /> },
  { x: 1069, y: 262, name: 'NFLX-line…mpare-FB', body: <NflxCompare /> },
  { x: 64, y: 422, name: 'NFLX-can…stick-chart', body: <CandleChart /> },
  { x: 313, y: 422, name: 'NFLX-can…d-in-12hrs', body: <CandleChart b /> },
  {
    x: 64, y: 590, name: 'select-line…pe-modal',
    body: <Modal title="Select line type"><MRow icon="⌁" t="Line" /><MRow icon="▟" t="Area" on /><MRow icon="▮" t="Candle" /><MRow icon="▯" t="Hollow candle" /><MRow icon="⊦" t="Bar" /></Modal>,
  },
  {
    x: 313, y: 590, name: 'settings-modal',
    body: (
      <Modal title="Settings" short>
        <ToggleRow t="Events" on /><ToggleRow t="Extended hours" />
        <div className="mx-[7px] mt-[10px] flex h-[15px] rounded-[2px] border border-[#ccdff2] text-center text-[5px] leading-[13px]">
          <span className="flex-1 bg-[#1a8cff] text-white">Linear axis</span><span className="flex-1 text-[#1a8cff]">Logarithmic axis</span>
        </div>
      </Modal>
    ),
  },
  {
    x: 561, y: 590, name: 'draw-modal',
    body: <Modal title="Draw annotations"><MRow icon="✎" t="Doodle" /><MRow icon="□" t="Rectangle" /><MRow icon="○" t="Ellipse" /><MRow icon="⁄" t="Line" on /><MRow icon="⇨" t="Arrow" /></Modal>,
  },
  { x: 810, y: 590, name: 'interval-modal', body: <Modal title="Select interval"><MRow t="Set custom" /><MRow t="1 min" /><MRow t="5 mins" /><MRow t="15 mins" on /><MRow t="30 mins" /></Modal> },
  {
    x: 1058, y: 590, name: 'set-custom-modal',
    body: (
      <Modal title="Set custom interval" back ok>
        <div className="mx-[7px] my-[3px] h-[12px] shrink-0 border border-[#ddd] bg-white px-[4px] text-[5px] leading-[10px] text-[#aaa]">Enter</div>
        <MRow t="Minute(s)" line={false} /><MRow t="Hour(s)" /><MRow t="Day(s)" on /><MRow t="Week(s)" />
      </Modal>
    ),
  },
  { x: 1307, y: 590, name: 'interval-custom-set', body: <Modal title="Select interval"><MRow t="Set custom: 2 hours" on /><MRow t="1 min" /><MRow t="5 mins" /><MRow t="15 mins" /><MRow t="30 mins" /></Modal> },
  { x: 1556, y: 590, name: 'plus-sign-modal', body: <PlusModal /> },
  { x: 1811, y: 590, name: 'settings-modal-v2', body: <Modal title="Settings"><ToggleRow t="Events" on /><ToggleRow t="Extended hours" /><div className="h-[5px]" /><MRow t="Linear axis" /><MRow t="Logarithmic axis" on line={false} /></Modal> },
  { x: 64, y: 828, name: 'NFLX-are…finger-hold', body: <FingerHold /> },
  { x: 312, y: 828, name: 'NFLX-hold', body: <NflxHold /> },
  { x: 64, y: 988, name: '19 two fin…press hold', body: <TwoFinger kind="full" /> },
  { x: 312, y: 988, name: 'two-finger…s-hold-sm', body: <TwoFinger kind="sm" /> },
  { x: 561, y: 988, name: 'two-finger…-sm copy', body: <TwoFinger kind="copy" /> },
  { x: 312, y: 1149, name: 'NFLX-FB-…pare-hold', body: <CompareHold /> },
  { x: 312, y: 1309, name: 'NFLX-chart-sm', body: <ChartSm /> },
  { x: 312, y: 1467, name: 'NFLX-are…icators-sm', body: <IndicatorsSm /> },
  { x: 947, y: 998, name: 'basic data', body: <Basic /> },
  { x: 1194, y: 998, name: 'RSI', body: <Rsi /> },
  { x: 1444, y: 998, name: 'macd', body: <Rsi macd /> },
  { x: 947, y: 1176, name: '08', body: <Dis08 /> },
  { x: 1196, y: 1176, name: '10 after hours events', body: <AfterHours /> },
  { x: 1444, y: 1176, name: '19', body: <Dis19 /> },
  { x: 1693, y: 1176, name: '18', body: <Dis18 /> },
];

function Canvas() {
  return (
    <main className="relative min-w-0 flex-1 overflow-hidden bg-[#f1f1f1]">
      {BOARDS.map((b) => (
        <section key={b.name} className="absolute w-[238px]" style={{ left: b.x, top: b.y - 35 }}>
          <h2 className="h-[35px] whitespace-nowrap pl-[6px] text-[22px] leading-[28px] text-[#929292]">{b.name}</h2>
          <div className="relative flex h-[134px] flex-col overflow-hidden bg-white shadow-[0_3px_8px_rgba(0,0,0,0.3)]">{b.body}</div>
        </section>
      ))}
    </main>
  );
}

/* ---------- toolbar ---------- */

const LB = 'url(#tb-blue)';
const LG = 'url(#tb-green)';
const TEAL = 'url(#tb-teal)';

const Defs = () => (
  <svg className="absolute size-0" aria-hidden="true">
    <defs>
      <linearGradient id="tb-blue" x2="0" y2="1"><stop stopColor="#a9e0ee" /><stop offset="1" stopColor="#8fd3ec" /></linearGradient>
      <linearGradient id="tb-green" x2="0" y2="1"><stop stopColor="#cbe283" /><stop offset="1" stopColor="#a9d67b" /></linearGradient>
      <linearGradient id="tb-teal" x2="0" y2="1"><stop stopColor="#aee9df" /><stop offset="1" stopColor="#96d9cb" /></linearGradient>
      <linearGradient id="tb-lens" x2="0" y2="1"><stop stopColor="#fff" /><stop offset=".6" stopColor="#e4e4ea" /><stop offset="1" stopColor="#b4d3f2" /></linearGradient>
      <linearGradient id="tb-cloud" x2="0" y2="1"><stop stopColor="#5fdcff" /><stop offset="1" stopColor="#34b5f7" /></linearGradient>
      <linearGradient id="tb-shaft" gradientUnits="userSpaceOnUse" x1="0" y1="36" x2="0" y2="48"><stop stopColor="#fff" /><stop offset="1" stopColor="#fff" stopOpacity="0" /></linearGradient>
      <clipPath id="tb-cut"><path d="M6 44L44 4V48H6Z" /></clipPath>
    </defs>
  </svg>
);

const Ic = ({ children }: { children: React.ReactNode }) => (
  <svg viewBox="0 0 48 48" className="size-[48px] shrink-0 overflow-visible" fill="none">{children}</svg>
);

const handles = (pts: Pt[], round = false) =>
  pts.map(([x, y], i) => <rect key={i} x={x - 2.5} y={y - 2.5} width={5} height={5} rx={round ? 2.5 : 0} fill="#f2f2f2" stroke="#b9b7b9" />);

const Gem = () => (
  <>
    <path d="M15 11L24 10l9 1 6 9-15 18L9 20Z" fill="#fdad2c" />
    <path d="M15 11l-6 9h6l9-10 9 10h6l-6-9-9-1Z" fill="#fdd231" />
    <path d="M15 20l9-10 9 10Z" fill="#feeeb7" />
    <path d="M9 20h6l9 18ZM39 20h-6l-9 18Z" fill="#ea6c00" opacity={0.8} />
  </>
);

const Button = () => <rect x={4.5} y={4.5} width={39} height={39} rx={7} fill="#fcfcfc" stroke="#9d9b9d" />;
const sq = (x: number, y: number, fill: string, stroke = '#8fc0b8') => <rect x={x} y={y} width={25} height={25} rx={3} fill={fill} stroke={stroke} />;

type Tool = { label: string; w: string; icon: React.ReactNode; on?: boolean; caret?: boolean };

const GROUPS: Tool[][] = [
  [
    { label: 'Group', w: 'w-[57px]', icon: <>
      <rect x={4.5} y={4.5} width={39} height={39} stroke="#b3b1b3" />{handles([[4, 4], [44, 4], [4, 44], [44, 44]])}
      <rect x={18} y={18} width={19} height={19} rx={3} fill="#e6e6e6" stroke="#bbb" /><rect x={10} y={10} width={19} height={19} rx={3} fill={LB} stroke="#86bccd" /></> },
    { label: 'Ungroup', w: 'w-[81px]', icon: <>
      <rect x={18} y={18} width={26} height={26} fill="#e6e6e6" stroke="#b9b7b9" /><rect x={4.5} y={4.5} width={26} height={26} fill={LB} stroke="#86bccd" />
      {handles([[4, 4], [31, 4], [4, 30], [31, 30], [44, 18], [18, 44], [44, 44]])}</> },
  ],
  [
    { label: 'Create Symbol', w: 'w-[141px]', icon: <>
      <rect x={4.5} y={4.5} width={39} height={39} rx={7} fill="#e9e8e9" stroke="#bfbdbf" />
      <path d="M20 34C12 29 12 20 19 15M13 15h7v7M28 14c8 5 8 14 1 19M35 33h-7v-7" stroke="#d998e2" strokeWidth={2.5} /></> },
  ],
];

const GROUPS_AFTER: Tool[][] = [
  [
    { label: 'Edit', w: 'w-[48px]', icon: <>
      <circle cx={24} cy={24} r={19.5} stroke="#b9b7b9" /><path d="M36 9A19.500 19.500 0 0 1 9 36C16 38 20 28 22 23S30 12 36 9Z" fill={LG} stroke="#9fba74" />{handles([[36, 8], [22, 22], [8, 36]], true)}</> },
    { label: 'Transform', w: 'w-[96px]', icon: <>
      <rect x={4.5} y={4.5} width={39} height={39} fill="#d0e09f" stroke="#a9bd81" /><path d="M14 14H34L43.500 43.500H4.500Z" fill={LG} stroke="#9fba74" />
      {handles([[4, 4], [44, 4], [4, 44], [44, 44], [14, 14], [34, 14]], true)}</> },
    { label: 'Rotate', w: 'w-[61px]', icon: <>
      <path d="M21 4.500C2 7-5 26 8 38L4.500 43.500H20V27L15 33C8 24 10 12 21 4.500Z" fill={LG} stroke="#9fba74" />
      <path d="M27 43.500C46 41 53 22 40 10L43.500 4.500H28V21l5-6C40 24 38 36 27 43.500Z" fill={LG} stroke="#9fba74" /></> },
    { label: 'Flatten', w: 'w-[65px]', icon: <>
      <circle cx={30} cy={18} r={14} fill={TEAL} stroke="#8fc0b8" /><circle cx={17} cy={30} r={13} fill={TEAL} stroke="#8fc0b8" />
      <g clipPath="url(#tb-cut)"><circle cx={30} cy={18} r={14} fill={LG} stroke="#9fba74" /><circle cx={17} cy={30} r={13} fill={LG} /></g><path d="M8 42L41 8" stroke="#86a978" /></> },
  ],
  [
    { label: 'Mask', w: 'w-[49px]', icon: <>
      <circle cx={26} cy={24} r={19.5} fill={LG} stroke="#9fba74" /><rect x={4.5} y={9.5} width={31} height={29} fill="#e4ece8" fillOpacity={0.9} stroke="#b0bcb8" /><rect x={7.5} y={12.5} width={25} height={23} fill={LB} stroke="#86bccd" /></> },
    { label: 'Scale', w: 'w-[50px]', icon: <><circle cx={28} cy={20} r={16} fill={LG} stroke="#9fba74" /><circle cx={22} cy={27} r={13} fill={LG} stroke="#9fba74" /><circle cx={13} cy={35} r={8.5} fill={LG} stroke="#9fba74" /></> },
  ],
  [
    { label: 'Union', w: 'w-[54px]', icon: <path d="M21 4.500H41a3 3 0 0 1 3 3V27a3 3 0 0 1-3 3H30V41a3 3 0 0 1-3 3H7a3 3 0 0 1-3-3V21a3 3 0 0 1 3-3H18V7.500a3 3 0 0 1 3-3Z" fill={TEAL} stroke="#8fc0b8" /> },
    { label: 'Subtract', w: 'w-[82px]', icon: <>{sq(4, 18, TEAL)}{sq(18, 5, '#e9e8e9', '#b9b7b9')}</> },
    { label: 'Intersect', w: 'w-[84px]', icon: <>{sq(4, 18, '#e9e8e9', '#b9b7b9')}{sq(18, 5, '#e9e8e9', '#b9b7b9')}<rect x={18} y={18} width={11} height={12} fill={TEAL} stroke="#8fc0b8" /></> },
    { label: 'Difference', w: 'w-[95px]', icon: <>{sq(4, 18, TEAL)}{sq(18, 5, TEAL)}<rect x={18} y={18} width={11} height={12} rx={2} fill="#e6e6e6" stroke="#8fc0b8" /></> },
  ],
  [
    { label: 'Forward', w: 'w-[76px]', icon: <><rect x={4.5} y={20.5} width={39} height={9} fill="#e3e2e3" stroke="#bbb" /><path d="M4.500 34.500H21V15H14L24 3 34 15H27V34.500H43.500V43.500H4.500Z" fill={LB} stroke="#86bccd" /></> },
    { label: 'Backward', w: 'w-[92px]', icon: <><path d="M4.500 4.500H43.500V13.500H28V32H33L24 43 15 32H20V13.500H4.500Z" fill={LB} stroke="#86bccd" /><rect x={4.5} y={18.5} width={39} height={9} fill="#e3e2e3" stroke="#bbb" /></> },
  ],
  [
    { label: 'Mirror', w: 'w-[56px]', on: true, icon: <><Button /><Gem /></> },
    { label: 'Cloud', w: 'w-[55px]', on: true, icon: <>
      <path d="M7 38A10 10 0 0 1 5 20C7 14 12 13 17 15 18 1 38 1 38 18 50 19 50 36 40 38Z" fill="url(#tb-cloud)" stroke="#4a9cc4" />
      <path d="M15 32L24 22l9 10" stroke="#fff" strokeWidth={4} /><path d="M22 24h4V48H22Z" fill="url(#tb-shaft)" /></> },
  ],
  [{ label: 'View', w: 'w-[57px]', on: true, caret: true, icon: <g transform="translate(-7 0)"><Button /><rect x={11} y={12.5} width={26} height={23} rx={1} stroke="#4a4a4a" strokeWidth={2.5} /><path d="M11 18H37M18.500 18V35" stroke="#4a4a4a" strokeWidth={2} /></g> }],
  [{ label: 'Export', w: 'w-[62px]', on: true, icon: <><rect x={8.5} y={16.5} width={31} height={27} rx={3} fill="#fafafa" stroke="#9d9b9d" /><path d="M24 30V3M15 12L24 3l9 9" stroke="#4a4a4a" strokeWidth={3.5} /></> }],
];

function ToolButton({ t }: { t: Tool }) {
  return (
    <button type="button" className={`flex flex-col items-center whitespace-nowrap text-[20px] leading-[28px] ${t.w} ${t.on ? 'text-[#2b2b2b]' : 'text-[#838183]'}`}>
      <span className="relative">
        <Ic>{t.icon}</Ic>
        {t.caret && <svg viewBox="0 0 12 9" className="absolute -right-[8px] bottom-[7px] h-[9px] w-[12px]"><path d="M0 0h12L6 9Z" fill="#3c3c3c" /></svg>}
      </span>
      <span className="mt-[4px]">{t.label}</span>
    </button>
  );
}

const ToolGroup = ({ g }: { g: Tool[] }) => <div className="flex gap-[19px]">{g.map((t) => <ToolButton key={t.label} t={t} />)}</div>;

function Toolbar() {
  return (
    <header className="relative h-[138px] shrink-0 rounded-t-[10px] border-b-2 border-[#a9a8a9] bg-linear-to-b from-[#e9e7e9] to-[#d1cfd1]">
      <Defs />
      <div className="relative flex h-[44px] items-center justify-center pb-1">
        <div className="absolute left-[16px] top-[10px] flex gap-[16px]">
          <button type="button" aria-label="Close" className="size-[24px] rounded-full border border-[#e14640] bg-[#fc605b]" />
          <button type="button" aria-label="Minimize" className="size-[24px] rounded-full border border-[#dfa023] bg-[#fdbc40]" />
          <button type="button" aria-label="Zoom" className="size-[24px] rounded-full border border-[#24ab35] bg-[#34c84a]" />
        </div>
        <div className="flex items-center gap-[12px] pl-[18px] pt-[4px]">
          <svg viewBox="0 0 24 32" className="h-[32px] w-[24px]">
            <path d="M.5.5H15L23.500 9V31H.5Z" fill="#fff" stroke="#a5a5a5" /><path d="M15 .5V9h8.500" fill="#eee" stroke="#bbb" />
            <path d="M7 9.500h10l4 5-9 10.500-9-10.500Z" fill="#fdad2c" /><path d="M7 9.500h10l4 5H3Z" fill="#fdd231" /><path d="M3 14.500h5L12 25ZM21 14.500h-5L12 25Z" fill="#ea6c00" />
          </svg>
          <h1 className="text-[26px] leading-[32px] text-[#3a3a3a]">Finance-Native-Charts</h1>
          <svg viewBox="0 0 16 10" className="h-[10px] w-[16px]" fill="none" stroke="#a3a3a3" strokeWidth={2.5}><path d="M1 1.500l7 7 7-7" /></svg>
        </div>
      </div>
      <div className="flex items-start justify-between pl-[18px] pr-[14px] pt-[6px]">
        <button type="button" className="flex w-[55px] flex-col items-center text-[20px] leading-[28px] text-[#2b2b2b]">
          <span className="relative self-start -ml-1">
            <Ic><Button /><path d="M24 12V36M12 24H36" stroke="#3a3a3a" strokeWidth={2} /></Ic>
            <svg viewBox="0 0 12 9" className="absolute -right-[14px] bottom-[7px] h-[9px] w-[12px]"><path d="M0 0h12L6 9Z" fill="#3c3c3c" /></svg>
          </span>
          <span className="mt-[4px]">Insert</span>
        </button>
        {GROUPS.map((g) => <ToolGroup key={g[0].label} g={g} />)}
        <div className="flex w-[124px] flex-col items-center text-[20px] leading-[28px] text-[#2b2b2b]">
          <div className="flex h-[48px] items-center gap-[12px]">
            <button type="button" aria-label="Zoom out"><svg viewBox="0 0 16 16" className="size-[16px]"><path d="M2 8H14" stroke="#6b6b6b" strokeWidth={4} strokeLinecap="round" /></svg></button>
            <Ic><path d="M29 29L41 41" stroke="#3f3f3f" strokeWidth={6} strokeLinecap="round" /><circle cx={19} cy={19} r={13} fill="url(#tb-lens)" stroke="#3f3f3f" strokeWidth={3} /></Ic>
            <button type="button" aria-label="Zoom in"><svg viewBox="0 0 16 16" className="size-[16px]"><path d="M1.500 8h13M8 1.500v13" stroke="#6b6b6b" strokeWidth={3.5} strokeLinecap="round" /></svg></button>
          </div>
          <span className="mt-[4px]">18%</span>
        </div>
        {GROUPS_AFTER.map((g) => <ToolGroup key={g[0].label} g={g} />)}
      </div>
    </header>
  );
}

/* ---------- left sidebar ---------- */

const PAGES = ['iPhone QSP Mini Chart', 'iPhone Full Screen Chart', 'Android QSP Mini Chart', 'Android Full Screen Chart'];
const ARTBOARDS = ['settings-modal-v2', 'BRK-area-chart', 'NFLX-line-chart', 'NFLX-FB-GOOGL-compare-hold', 'NFLX-line-chart-compare-FB', 'NFLX-area-chart-indicators-sm', 'NFLX-area-chart-indicators', 'NFLX-chart-sm', 'NFLX-area-chart'];
const LAYERS = ['Yahoo watermark', 'Header', 'control-bar', 'x axis 10-4', 'volume-pill', 'open lineand flag', 'volume-bars', 'vertical-lines', 'horizontal-lines', 'shading', 'pill', 'Y data', 'area-chart'];

const Closed = () => <svg viewBox="0 0 12 23" className="h-[23px] w-[12px]"><path d="M0 0L12 11.500 0 23Z" fill="#a4a4a4" /></svg>;
const Open = () => <svg viewBox="0 0 24 11" className="h-[11px] w-[24px]"><path d="M0 0H24L12 11Z" fill="#a4a4a4" /></svg>;

const Folder = () => (
  <svg viewBox="0 0 30 26" className="h-[26px] w-[30px]">
    <path d="M.5 3Q.5 1 2 1H9l3 3H28Q29.500 4 29.500 6V24H.5Z" fill="#9adcfb" stroke="#7cc3e6" /><path d="M.5 6.500H29.500V24.500H.5Z" fill="#77cef7" stroke="#63b6de" />
  </svg>
);

const Kettle = () => (
  <svg viewBox="0 0 30 20" className="h-[20px] w-[30px]" fill="#8f7399"><path d="M0 3L8 4 10 2 12 5 14 0 16 5 29 4 27 17H4L3 8Z" /><path d="M18 8h3v3h-3ZM23 8h2v3h-2Z" fill="#ebebeb" /></svg>
);

function Sidebar() {
  return (
    <aside className="flex w-[416px] shrink-0 flex-col border-r-2 border-[#b4b4b4] bg-[#ebebeb] text-[22px] leading-[28px] text-black">
      <div className="flex h-[54px] shrink-0 items-center justify-between border-b-2 border-[#b7b7b7] bg-[#f3f3f3] pl-[20px] pr-[15px]">
        <h2>Pages</h2>
        <button type="button" aria-label="Add page"><svg viewBox="0 0 24 24" className="size-[24px]"><path d="M12 1.500v21M1.500 12h21" stroke="#a0a0a0" strokeWidth={3.5} strokeLinecap="round" /></svg></button>
      </div>
      <ul className="h-[278px] shrink-0">
        {PAGES.map((p, i) => (
          <li key={p} className={i === 1 ? 'bg-[#6d9de1] text-white' : i === 3 ? 'bg-[#f0f0f0]' : ''}>
            <button type="button" className="flex h-[54px] w-full items-center pl-[54px] pt-[2px]">{p}</button>
          </li>
        ))}
      </ul>
      <div className="flex h-[54px] shrink-0 items-center justify-between border-y-2 border-[#b7b7b7] bg-[#f3f3f3] pl-[20px] pr-[12px] text-[#8a8a8a]">
        <h2>iPhone Full Screen Chart</h2>
        <button type="button" aria-label="Collapse pages">
          <svg viewBox="0 0 26 24" className="h-[24px] w-[26px]" fill="none"><rect x={1} y={1} width={24} height={22} rx={3} stroke="#a4a4a4" strokeWidth={2} /><path d="M1 1.500H25V5H1Z" fill="#a4a4a4" /><path d="M7 17.500L13 10.500l6 7Z" fill="#a4a4a4" /></svg>
        </button>
      </div>
      <ul className="flex min-h-0 flex-1 flex-col justify-end overflow-hidden">
        {ARTBOARDS.map((a, i) => (
          <li key={a} className="shrink-0 border-b border-[#959595] bg-[#fafafa]">
            <button type="button" className="flex h-[53px] w-full items-center pt-[2px]">
              <span className={i === 8 ? 'flex w-[54px] pl-[16px]' : 'flex w-[54px] pb-[2px] pl-[24px]'}>{i === 8 ? <Open /> : <Closed />}</span>{a}
            </button>
          </li>
        ))}
        {LAYERS.map((l, i) => (
          <li key={l} className={`shrink-0 ${i % 2 ? 'bg-[#f0f0f0]' : 'bg-[#ebebeb]'}`}>
            <button type="button" className="flex h-[54px] w-full items-center pl-[56px] pt-[2px]">
              <span className="flex w-[33px] pb-[2px]"><Closed /></span><span className="flex w-[45px] pb-[2px]">{i === 0 ? <Kettle /> : <Folder />}</span>{l}
            </button>
          </li>
        ))}
      </ul>
      <div className="flex h-[60px] shrink-0 items-center border-t-2 border-[#c4c4c4] bg-[#f5f5f5] pl-[9px] pr-[14px] text-[#4595f2]">
        <label className="flex h-[36px] w-[278px] items-center gap-[10px] rounded-[6px] border-2 border-[#c3c3c3] bg-white pl-[76px]">
          <svg viewBox="0 0 24 24" className="size-[24px]" fill="none" stroke="#5c5c5c" strokeWidth={2}><circle cx={10} cy={10} r={8} /><path d="M16 16l7 7" /></svg>
          <input aria-label="Filter" placeholder="Filter" className="w-[140px] bg-transparent outline-none placeholder:text-[#c0c0c0]" />
        </label>
        <button type="button" aria-label="Show artboards" className="ml-auto">
          <svg viewBox="0 0 24 24" className="size-[24px]" fill="none" stroke="#4595f2" strokeWidth={3}><path d="M7 6V2H22.500V15H19" /><rect x={1.5} y={8} width={16} height={14} rx={1} /></svg>
        </button>
        <button type="button" aria-label="Show slices" className="ml-[8px]"><svg viewBox="0 0 24 24" className="size-[24px]"><path d="M0 23L17 2Q21 0 24 1 23 4 19 8L20 10 15 13 16 15 11 17Z" fill="#4595f2" /></svg></button>
        <span className="ml-[6px] text-[20px] font-semibold">88</span>
      </div>
    </aside>
  );
}

/* ---------- inspector ---------- */

const A = '#a2d3f8';
const L = '#b9b9b9';
const ALIGN: [string, React.ReactNode][] = [
  ['Distribute horizontally', <><path d="M2 0V28M26 0V28" stroke={L} strokeWidth={2} /><path d="M14 7V21" stroke={A} strokeWidth={6} strokeLinecap="round" /></>],
  ['Distribute vertically', <><path d="M0 2H28M0 26H28" stroke={L} strokeWidth={2} /><path d="M7 14H21" stroke={A} strokeWidth={6} strokeLinecap="round" /></>],
  ['Align left', <><path d="M1 0V28" stroke={L} strokeWidth={2} /><path d="M8 7H23M8 21H15" stroke={A} strokeWidth={6} strokeLinecap="round" /></>],
  ['Align center', <><path d="M14 0V28" stroke={L} strokeWidth={2} /><path d="M4 7H24M8 21H20" stroke={A} strokeWidth={6} strokeLinecap="round" /></>],
  ['Align right', <><path d="M27 0V28" stroke={L} strokeWidth={2} /><path d="M5 7H20M13 21H20" stroke={A} strokeWidth={6} strokeLinecap="round" /></>],
  ['Align top', <><path d="M0 1H28" stroke={L} strokeWidth={2} /><path d="M7 8V22M21 8V14" stroke={A} strokeWidth={6} strokeLinecap="round" /></>],
  ['Align middle', <><path d="M0 14H28" stroke={L} strokeWidth={2} /><path d="M7 4V24M21 10V18" stroke={A} strokeWidth={6} strokeLinecap="round" /></>],
  ['Align bottom', <><path d="M0 27H28" stroke={L} strokeWidth={2} /><path d="M7 6V20M21 14V20" stroke={A} strokeWidth={6} strokeLinecap="round" /></>],
];

const AlignButton = ({ i }: { i: number }) => (
  <button type="button" aria-label={ALIGN[i][0]}><svg viewBox="0 0 28 28" className="size-[28px]" fill="none">{ALIGN[i][1]}</svg></button>
);

const Field = ({ label, edge = 'border-[#a9a9a9]' }: { label: string; edge?: string }) => (
  <label className="flex flex-col items-center text-[19px] leading-[30px]">
    <input className={`h-[36px] w-full border-2 bg-white px-2 ${edge}`} />
    {label}
  </label>
);

const FieldRow = ({ label, children }: { label: string; children: React.ReactNode }) => (
  <div className="grid grid-cols-[126px_116px_1fr_116px]"><span className="pt-[5px]">{label}</span>{children}</div>
);

const UpDown = ({ cls }: { cls: string }) => (
  <svg viewBox="0 0 16 24" className={cls} fill="none" stroke="#8c8c8c" strokeWidth={2.5}><path d="M1.500 8L8 1.500 14.500 8M1.500 16L8 22.500 14.500 16" /></svg>
);

function Inspector() {
  return (
    <aside className="w-[426px] shrink-0 border-l-2 border-[#b4b4b4] bg-[#e6e6e6] text-[22px] leading-[28px] text-black">
      <div className="flex h-[54px] border-b-2 border-[#b7b7b7] bg-[#f5f5f5]">
        <div className="flex w-[114px] items-center justify-between border-r-2 border-[#d9d9d9] pl-[13px] pr-[18px]"><AlignButton i={0} /><AlignButton i={1} /></div>
        <div className="flex flex-1 items-center justify-between pl-[18px] pr-[14px]">{[2, 3, 4, 5, 6, 7].map((i) => <AlignButton key={i} i={i} />)}</div>
      </div>
      <div className="flex flex-col gap-[4px] border-b-2 border-[#cdcdcd] pb-[6px] pl-[15px] pr-[17px] pt-[18px]">
        <FieldRow label="Position"><Field label="X" /><span /><Field label="Y" /></FieldRow>
        <FieldRow label="Size">
          <Field label="Width" edge="border-[#cacaca]" />
          <button type="button" aria-label="Lock proportions" className="flex justify-center pt-[7px]"><svg viewBox="0 0 14 20" className="h-[20px] w-[14px]" fill="none"><path d="M3.500 8V5a3.500 3.500 0 0 1 7-.5V6" stroke="#9c9c9c" strokeWidth={2} /><path d="M1 9H13V19H1Z" fill="#9c9c9c" /></svg></button>
          <Field label="Height" edge="border-[#cacaca]" />
        </FieldRow>
        <FieldRow label="Transform">
          <Field label="Rotate" /><span />
          <div className="flex flex-col items-center text-[19px] leading-[30px]">
            <div className="mb-[2px] mt-px flex h-[33px] w-full rounded-[7px] border border-[#d0d0d0] bg-[#f1f1f1]">
              <button type="button" aria-label="Flip horizontally" className="flex flex-1 items-center justify-center border-r-2 border-[#dedede]">
                <svg viewBox="0 0 26 22" className="h-[22px] w-[26px]"><path d="M0 20L10 2V20Z" fill="#dcdcdc" /><path d="M13 0V22" stroke="#dedede" strokeWidth={2} /><path d="M26 20L16 2V20Z" fill="#b3b3b3" /></svg>
              </button>
              <button type="button" aria-label="Flip vertically" className="flex flex-1 items-center justify-center">
                <svg viewBox="0 0 26 26" className="size-[26px]"><path d="M4 0L22 10H4Z" fill="#dcdcdc" /><path d="M0 13H26" stroke="#dedede" strokeWidth={2} /><path d="M4 26L22 16H4Z" fill="#b3b3b3" /></svg>
              </button>
            </div>
            Flip
          </div>
        </FieldRow>
      </div>
      <div className="flex flex-col gap-[18px] border-b-2 border-[#cdcdcd] pb-[18px] pl-[15px] pr-[17px] pt-[18px]">
        <div className="flex h-[36px] items-center">
          <label htmlFor="opacity" className="w-[126px]">Opacity</label>
          <input id="opacity" type="range" defaultValue={0} className="h-[4px] w-[162px] appearance-none rounded-full bg-[#cbcbcb] [&::-webkit-slider-thumb]:size-[24px] [&::-webkit-slider-thumb]:appearance-none [&::-webkit-slider-thumb]:rounded-full [&::-webkit-slider-thumb]:bg-[#fafafa] [&::-webkit-slider-thumb]:shadow-[0_1px_2px_rgba(0,0,0,0.3)]" />
          <input aria-label="Opacity value" className="ml-auto h-[36px] w-[84px] border-2 border-[#cacaca] bg-white px-2" />
        </div>
        <div className="flex h-[38px] items-center">
          <label htmlFor="blending" className="w-[126px]">Blending</label>
          <div className="relative flex-1">
            <select id="blending" className="block h-[38px] w-full appearance-none rounded-[7px] border border-[#d0d0d0] bg-[#f3f3f3] pl-[16px] text-[#8a8a8a] shadow-[0_1px_1px_rgba(0,0,0,0.12)]"><option>Normal</option></select>
            <UpDown cls="pointer-events-none absolute right-[8px] top-[7px] h-[24px] w-[16px]" />
          </div>
        </div>
      </div>
      {['Fills', 'Borders', 'Shadows', 'Inner Shadows', 'Gaussian Blur'].map((s) => (
        <div key={s} className="flex h-[52px] items-center border-b-2 border-[#cdcdcd] pl-[15px] pr-[14px] pt-[2px] font-bold text-[#555]">
          <h3>{s}</h3>
          {s === 'Gaussian Blur' && (
            <>
              <button type="button" aria-label="Blur type" className="ml-[14px]"><UpDown cls="h-[20px] w-[13px]" /></button>
              <input type="checkbox" aria-label="Enable blur" className="ml-auto size-[24px] appearance-none rounded-[5px] border border-[#c2c2c2] bg-[#f3f3f3]" />
            </>
          )}
        </div>
      ))}
    </aside>
  );
}

export default function App() {
  return (
    <div className="flex h-screen flex-col overflow-hidden bg-[#26292c] pt-[2px] font-['Inter',sans-serif]">
      <Toolbar />
      <div className="flex min-h-0 flex-1">
        <Sidebar />
        <Canvas />
        <Inspector />
      </div>
    </div>
  );
}
